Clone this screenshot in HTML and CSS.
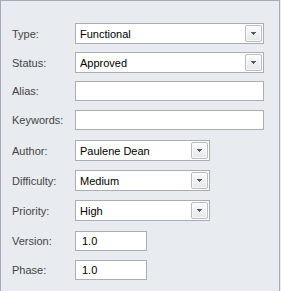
FILE: index.html
```html
<!DOCTYPE html>
<html>
<head>
<meta charset="utf-8">
<link rel="stylesheet" href="styles.css">
</head>
<body>
<div class="frame">
  <div class="form">
    <div class="row">
      <span class="label">Type:</span>
      <div class="combo wide"><span class="value">Functional</span><span class="btn"><svg width="5" height="3" viewBox="0 0 5 3"><rect x="0" y="0" width="5" height="1"/><rect x="1" y="1" width="3" height="1"/><rect x="2" y="2" width="1" height="1"/></svg></span></div>
    </div>
    <div class="row">
      <span class="label">Status:</span>
      <div class="combo wide"><span class="value">Approved</span><span class="btn"><svg width="5" height="3" viewBox="0 0 5 3"><rect x="0" y="0" width="5" height="1"/><rect x="1" y="1" width="3" height="1"/><rect x="2" y="2" width="1" height="1"/></svg></span></div>
    </div>
    <div class="row">
      <span class="label">Alias:</span>
      <div class="text wide"></div>
    </div>
    <div class="row">
      <span class="label">Keywords:</span>
      <div class="text wide"></div>
    </div>
    <div class="row">
      <span class="label">Author:</span>
      <div class="combo mid"><span class="value">Paulene Dean</span><span class="btn"><svg width="5" height="3" viewBox="0 0 5 3"><rect x="0" y="0" width="5" height="1"/><rect x="1" y="1" width="3" height="1"/><rect x="2" y="2" width="1" height="1"/></svg></span></div>
    </div>
    <div class="row">
      <span class="label">Difficulty:</span>
      <div class="combo mid"><span class="value">Medium</span><span class="btn"><svg width="5" height="3" viewBox="0 0 5 3"><rect x="0" y="0" width="5" height="1"/><rect x="1" y="1" width="3" height="1"/><rect x="2" y="2" width="1" height="1"/></svg></span></div>
    </div>
    <div class="row">
      <span class="label">Priority:</span>
      <div class="combo mid"><span class="value">High</span><span class="btn"><svg width="5" height="3" viewBox="0 0 5 3"><rect x="0" y="0" width="5" height="1"/><rect x="1" y="1" width="3" height="1"/><rect x="2" y="2" width="1" height="1"/></svg></span></div>
    </div>
    <div class="row">
      <span class="label">Version:</span>
      <div class="text small"><span class="value">1.0</span></div>
    </div>
    <div class="row">
      <span class="label">Phase:</span>
      <div class="text small"><span class="value">1.0</span></div>
    </div>
  </div>
</div>
</body>
</html>
```
FILE: styles.css
```css
html, body {
  margin: 0;
  padding: 0;
  background: #e8ebf0;
}
.frame {
  width: 278px;
  height: 290px;
  border-top: 1px solid #a7aab0;
  border-left: 1px solid #a7aab0;
  border-right: 1px solid #a7aab0;
  background: #e8ebf0;
  font-family: "Liberation Sans", Arial, sans-serif;
  font-size: 11px;
}
.form {
  display: grid;
  grid-template-rows: 29px 29px 29px 30px 30px 30px 31px 29px 20px;
  padding: 22px 0 0 11px;
}
.row {
  display: flex;
  align-items: center;
  align-self: start;
}
.label {
  width: 63px;
  color: #454545;
}
.combo, .text {
  box-sizing: border-box;
  background: #fff;
  border: 1px solid #abadb3;
  display: flex;
  align-items: center;
  color: #000;
}
.combo {
  height: 21px;
  padding-left: 4px;
}
.text {
  height: 20px;
  padding-left: 6px;
}
.wide { width: 189px; }
.mid { width: 135px; }
.small { width: 72px; }
.value {
  white-space: nowrap;
}
.btn {
  margin-left: auto;
  margin-right: 1px;
  width: 17px;
  height: 17px;
  box-sizing: border-box;
  border: 1px solid #b9bcc2;
  border-radius: 2px;
  background: linear-gradient(#fafbfc, #e5e7ea);
  box-shadow: inset 0 0 0 1px rgba(255,255,255,0.7);
  display: flex;
  align-items: center;
  justify-content: center;
}
.btn svg {
  display: block;
  fill: #555a60;
  margin-left: 0;
}
```
